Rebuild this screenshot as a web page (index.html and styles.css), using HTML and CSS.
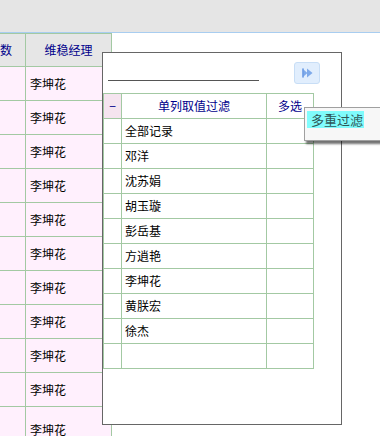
FILE: index.html
```html
<!DOCTYPE html>
<html lang="en">
<head>
  <meta charset="UTF-8">
  <title>单列取值过滤</title>
  <link rel="stylesheet" href="styles.css">
</head>
<body>

  <div class="top-bar"></div>

  <div class="grid-area">
    <div class="data-grid">
      <div class="cell head">人数</div>
      <div class="cell head">维稳经理</div>
      <div class="cell"></div><div class="cell">李坤花</div>
      <div class="cell"></div><div class="cell">李坤花</div>
      <div class="cell"></div><div class="cell">李坤花</div>
      <div class="cell"></div><div class="cell">李坤花</div>
      <div class="cell"></div><div class="cell">李坤花</div>
      <div class="cell"></div><div class="cell">李坤花</div>
      <div class="cell"></div><div class="cell">李坤花</div>
      <div class="cell"></div><div class="cell">李坤花</div>
      <div class="cell"></div><div class="cell">李坤花</div>
      <div class="cell"></div><div class="cell">李坤花</div>
      <div class="cell last"></div><div class="cell last">李坤花</div>
    </div>
  </div>

  <!-- filter dialog -->
  <div class="filter-dialog">
    <div class="filter-header">
      <div class="filter-line"></div>
      <button class="go-btn">
        <svg width="26" height="22" viewBox="0 0 26 22">
          <polygon points="8,6 13.5,11 8,16" fill="#7eaaea"/>
          <rect x="8" y="6" width="1.5" height="10" fill="#6d9ce4"/>
          <polygon points="13,6 19,11 13,16" fill="#7eaaea"/>
        </svg>
      </button>
    </div>

    <div class="filter-table">
      <div class="fcell fhead toggle">−</div>
      <div class="fcell fhead center">单列取值过滤</div>
      <div class="fcell fhead center">多选</div>

      <div class="fcell"></div><div class="fcell">全部记录</div><div class="fcell"></div>
      <div class="fcell"></div><div class="fcell">邓洋</div><div class="fcell"></div>
      <div class="fcell"></div><div class="fcell">沈苏娟</div><div class="fcell"></div>
      <div class="fcell"></div><div class="fcell">胡玉璇</div><div class="fcell"></div>
      <div class="fcell"></div><div class="fcell">彭岳基</div><div class="fcell"></div>
      <div class="fcell"></div><div class="fcell">方逍艳</div><div class="fcell"></div>
      <div class="fcell"></div><div class="fcell">李坤花</div><div class="fcell"></div>
      <div class="fcell"></div><div class="fcell">黄朕宏</div><div class="fcell"></div>
      <div class="fcell"></div><div class="fcell">徐杰</div><div class="fcell"></div>
      <div class="fcell"></div><div class="fcell"></div><div class="fcell"></div>
    </div>
  </div>

  <!-- context menu -->
  <div class="context-menu">
    <div class="menu-item">多重过滤</div>
  </div>

</body>
</html>
```

FILE: styles.css
```css
* {
  margin: 0;
  padding: 0;
  box-sizing: border-box;
}

body {
  font-family: "Noto Sans CJK SC", "Liberation Sans", sans-serif;
  font-size: 12px;
  color: #000;
  background-color: #fff;
  width: 380px;
  height: 436px;
  overflow: hidden;
  position: relative;
}

.top-bar {
  height: 33px;
  background-color: #e5e5e5;
  border-bottom: 1px solid #a8cdf0;
}

.grid-area {
  overflow: hidden;
}

.data-grid {
  display: grid;
  grid-template-columns: 51px 86px;
  width: 137px;
  margin-left: -25px;
  border-top: 1px solid #a3c9a3;
}

.cell {
  height: 34px;
  border-right: 1px solid #a3c9a3;
  border-bottom: 1px solid #a3c9a3;
  background-color: #fff0fd;
  padding-left: 4px;
  display: flex;
  align-items: center;
  line-height: 1;
}

.cell.head {
  height: 33px;
  background-color: #e6e6e6;
  color: #00008b;
  justify-content: center;
  padding-left: 0;
}

.cell.last {
  height: 46px;
}

/* filter dialog */
.filter-dialog {
  position: absolute;
  left: 102px;
  top: 52px;
  width: 240px;
  height: 373px;
  border: 1px solid #666;
  background-color: #fff;
}

.filter-header {
  display: flex;
  align-items: flex-start;
  height: 40px;
  padding: 9px 0 0 5px;
}

.filter-line {
  width: 151px;
  margin-top: 18px;
  border-top: 1px solid #555;
}

.go-btn {
  width: 26px;
  height: 22px;
  margin-left: 35px;
  border: 1px solid #c8def6;
  border-radius: 3px;
  background-color: #e1eefd;
  display: flex;
  align-items: center;
  justify-content: center;
}

.go-btn svg {
  display: block;
}

.filter-table {
  display: grid;
  grid-template-columns: 18px 145px 47px;
  width: 211px;
  border-top: 1px solid #a3c9a3;
  border-left: 1px solid #a3c9a3;
}

.fcell {
  height: 25px;
  border-right: 1px solid #a3c9a3;
  border-bottom: 1px solid #a3c9a3;
  padding-left: 3px;
  display: flex;
  align-items: center;
  line-height: 1;
}

.fhead {
  color: #00008b;
}

.fhead.center {
  justify-content: center;
  padding-left: 0;
}

.fhead.toggle {
  background-color: #f5e4ef;
  justify-content: center;
  padding-left: 0;
}

/* context menu */
.context-menu {
  position: absolute;
  left: 304px;
  top: 107px;
  width: 84px;
  height: 34px;
  background-color: #f7f7f7;
  border: 1px solid #a0a0a0;
  box-shadow: 2px 3px 2px rgba(0, 0, 0, 0.55);
  padding: 3px 0 0 2px;
}

.menu-item {
  display: inline-block;
  background-color: #80fcfc;
  color: #2f5656;
  font-size: 13px;
  line-height: 17px;
  height: 17px;
  padding: 0 1px 0 4px;
}
```
